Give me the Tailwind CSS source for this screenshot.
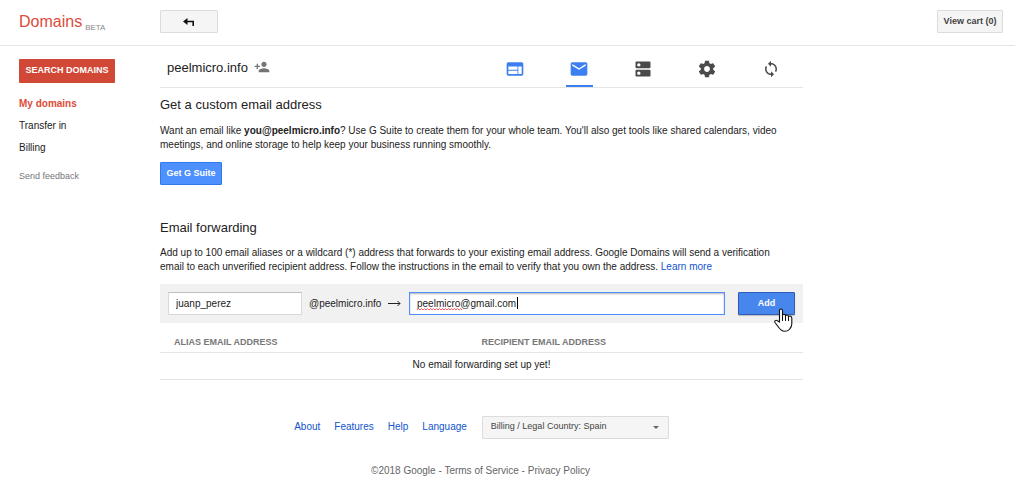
<!DOCTYPE html>
<html lang="en">
<head>
<meta charset="utf-8">
<meta name="viewport" content="width=device-width, initial-scale=1">
<title>Domains</title>
<script src="https://cdn.jsdelivr.net/npm/@tailwindcss/browser@4"></script>
</head>
<body class="bg-white font-['Liberation_Sans',Arial,sans-serif] text-[10px] leading-[14px] text-[#222]">
<header class="flex h-[46px] items-start border-b border-[#e5e5e5] pt-[10px] pr-[12px]">
  <div class="flex w-[160px] shrink-0 items-end gap-[3px] pl-[19px]">
    <a href="#" class="text-[16px] leading-[24px] text-[#dd4b39]">Domains</a>
    <span class="-mb-px text-[8px] leading-[14px] text-[#8a8a8a]">BETA</span>
  </div>
  <button aria-label="Back" class="flex h-[23px] w-[58px] items-center justify-center rounded-[1px] border border-[#dcdcdc] bg-[#f5f5f5]">
    <svg class="h-[8px] w-[12px]" viewBox="0 0 12 8"><path d="M0 3.500 4.500 0v7Z" fill="#111"/><path d="M3 3.500h7.200V8" fill="none" stroke="#111" stroke-width="1.600"/></svg>
  </button>
  <button class="ml-auto h-[23px] w-[66px] rounded-[1px] border border-[#dcdcdc] bg-[#f5f5f5] pb-[2px] text-[9px] font-bold whitespace-nowrap text-[#444]">View cart (0)</button>
</header>
<div class="flex pt-[13px]">
  <nav class="w-[160px] shrink-0 pl-[19px]">
    <button class="h-[24px] w-[96px] rounded-[1px] bg-[#d14836] pb-[2px] text-[9px] font-bold whitespace-nowrap text-white">SEARCH DOMAINS</button>
    <ul class="mt-[10px] leading-[22px]">
      <li><a href="#" class="font-bold text-[#dd4b39]">My domains</a></li>
      <li><a href="#">Transfer in</a></li>
      <li><a href="#">Billing</a></li>
    </ul>
    <a href="#" class="mt-[10px] block text-[9px] text-[#777]">Send feedback</a>
  </nav>
  <main class="max-w-[643px] flex-1">
    <div class="flex h-[29px] items-start border-b border-[#e5e5e5]">
      <h1 class="pl-[7px] text-[13px] leading-[18px]">peelmicro.info</h1>
      <button aria-label="Share domain" class="ml-[6px]"><svg class="h-[16px] w-[16px]" viewBox="0 0 24 24" fill="#757575"><path d="M15 12c2.210 0 4-1.790 4-4s-1.790-4-4-4-4 1.790-4 4 1.790 4 4 4zm-9-2V7H4v3H1v2h3v3h2v-3h3v-2H6zm9 4c-2.670 0-8 1.340-8 4v2h16v-2c0-2.660-5.330-4-8-4z"/></svg></button>
      <div class="ml-auto flex h-[28px] gap-[37px] pr-[18px]">
        <a href="#" aria-label="Website" class="flex w-[27px] justify-center pr-px"><svg class="h-[20px] w-[20px]" viewBox="0 0 24 24" fill="#3b7ff0"><path d="M20 4H4c-1.100 0-2 .9-2 2v12c0 1.100.9 2 2 2h16c1.100 0 2-.9 2-2V6c0-1.100-.9-2-2-2zm-5 14H4v-4h11v4zm0-5H4V9h11v4zm5 5h-4V9h4v9z"/></svg></a>
        <a href="#" aria-label="Email" aria-current="page" class="flex w-[27px] justify-center border-b-2 border-[#3b7ff0] pr-px"><svg class="h-[20px] w-[20px]" viewBox="0 0 24 24" fill="#3b7ff0"><path d="M20 4H4c-1.100 0-1.990.9-1.990 2L2 18c0 1.100.9 2 2 2h16c1.100 0 2-.9 2-2V6c0-1.100-.9-2-2-2zm0 4l-8 5-8-5V6l8 5 8-5v2z"/></svg></a>
        <a href="#" aria-label="DNS" class="flex w-[27px] justify-center pr-px"><svg class="h-[20px] w-[20px]" viewBox="0 0 24 24" fill="#4a4a4a"><path d="M20 13H4c-.55 0-1 .45-1 1v6c0 .55.45 1 1 1h16c.55 0 1-.45 1-1v-6c0-.55-.45-1-1-1zM7 19c-1.100 0-2-.9-2-2s.9-2 2-2 2 .9 2 2-.9 2-2 2zM20 3H4c-.55 0-1 .45-1 1v6c0 .55.45 1 1 1h16c.55 0 1-.45 1-1V4c0-.55-.45-1-1-1zM7 9c-1.100 0-2-.9-2-2s.9-2 2-2 2 .9 2 2-.9 2-2 2z"/></svg></a>
        <a href="#" aria-label="Settings" class="flex w-[27px] justify-center pr-px"><svg class="h-[20px] w-[20px]" viewBox="0 0 24 24" fill="#4a4a4a"><path d="M19.430 12.980c.04-.32.07-.64.07-.98s-.03-.66-.07-.98l2.110-1.650c.19-.15.24-.42.12-.64l-2-3.460c-.12-.22-.39-.3-.61-.22l-2.490 1c-.52-.4-1.080-.73-1.690-.98l-.38-2.650C14.460 2.180 14.250 2 14 2h-4c-.25 0-.46.18-.49.42l-.38 2.650c-.61.25-1.170.59-1.690.98l-2.490-1c-.23-.09-.49 0-.61.22l-2 3.460c-.13.22-.07.49.12.64l2.110 1.650c-.04.32-.07.65-.07.98s.03.66.07.98l-2.110 1.650c-.19.15-.24.42-.12.64l2 3.460c.12.22.39.3.61.22l2.490-1c.52.4 1.080.73 1.690.98l.38 2.650c.03.24.24.42.49.42h4c.25 0 .46-.18.49-.42l.38-2.650c.61-.25 1.170-.59 1.690-.98l2.490 1c.23.09.49 0 .61-.22l2-3.460c.12-.22.07-.49-.12-.64l-2.110-1.650zM12 15.500c-1.930 0-3.500-1.570-3.500-3.500s1.570-3.500 3.500-3.500 3.500 1.570 3.500 3.500-1.570 3.500-3.500 3.500z"/></svg></a>
        <a href="#" aria-label="Transfer" class="flex w-[27px] justify-center pr-px"><svg class="h-[20px] w-[20px]" viewBox="0 0 24 24" fill="#4a4a4a"><g transform="matrix(.9 0 0 .9 1.200 1.200)"><path d="M12 4V1L8 5l4 4V6c3.310 0 6 2.690 6 6 0 1.010-.25 1.970-.7 2.800l1.460 1.460C19.540 15.030 20 13.570 20 12c0-4.420-3.580-8-8-8zm0 14c-3.310 0-6-2.690-6-6 0-1.010.25-1.970.7-2.800L5.240 7.740C4.460 8.970 4 10.430 4 12c0 4.420 3.580 8 8 8v3l4-4-4-4v3z"/></g></svg></a>
      </div>
    </div>
    <section class="pt-[8px]">
      <h2 class="text-[13px] leading-[18px]">Get a custom email address</h2>
      <p class="mt-[10px]">Want an email like <b>you@peelmicro.info</b>? Use G Suite to create them for your whole team. You'll also get tools like shared calendars, video<br>meetings, and online storage to help keep your business running smoothly.</p>
      <button class="mt-[10px] h-[23px] w-[62px] rounded-[1px] border border-[#3079ed] bg-[#4d90fe] pb-[2px] text-[9px] font-bold whitespace-nowrap text-white">Get G Suite</button>
    </section>
    <section class="pt-[34px]">
      <h2 class="text-[13px] leading-[18px]">Email forwarding</h2>
      <p class="mt-[9px]">Add up to 100 email aliases or a wildcard (*) address that forwards to your existing email address. Google Domains will send a verification<br>email to each unverified recipient address. Follow the instructions in the email to verify that you own the address. <a href="#" class="text-[#1155cc]">Learn more</a></p>
      <form class="mt-[10px] flex items-center bg-[#f1f1f1] p-[8px]">
        <input aria-label="Alias" value="juanp_perez" class="h-[23px] w-[134px] border border-[#d9d9d9] border-t-[#c0c0c0] bg-white px-[7px]">
        <label for="recipient" class="ml-[7px] w-[75px] whitespace-nowrap">@peelmicro.info</label>
        <svg class="ml-[4px] h-[7px] w-[13px]" viewBox="0 0 13 7"><path d="M0 3.500h12M9.500 1 12 3.500 9.500 6" fill="none" stroke="#222"/></svg>
        <div class="relative ml-[8px] flex-1">
          <input id="recipient" value="peelmicro@gmail.com" class="block h-[23px] w-full border border-[#4d90fe] bg-white px-[7px] inset-shadow-[0_1px_2px_#0000004d]">
          <svg class="absolute top-[16px] left-[8px] h-[3px] w-[45px]" viewBox="0 0 45 3"><path d="M0 2l1.500-1.500 1.500 1.500 1.500-1.500 1.500 1.500 1.500-1.500 1.500 1.500 1.500-1.500 1.500 1.500 1.500-1.500 1.500 1.500 1.500-1.500 1.500 1.500 1.500-1.500 1.500 1.500 1.500-1.500 1.500 1.500 1.500-1.500 1.500 1.500 1.500-1.500 1.500 1.500 1.500-1.500 1.500 1.500 1.500-1.500 1.500 1.500 1.500-1.500 1.500 1.500 1.500-1.500 1.500 1.500 1.500-1.500 1.500 1.500" fill="none" stroke="#f33" stroke-width=".8"/></svg>
          <span class="absolute top-[5px] left-[108px] h-[12px] w-px bg-black"></span>
        </div>
        <div class="relative ml-[13px]">
          <button type="button" class="block h-[23px] w-[57px] rounded-[1px] border border-[#2f5bb7] bg-[#4787ed] pb-[2px] text-[9px] font-bold text-white shadow-[0_1px_1px_#0003]">Add</button>
          <svg class="absolute top-[16px] left-[36px] h-[24px] w-[19px]" viewBox="0 0 19 24"><path d="M5.500 14V2.500Q5.500 1 7 1t1.500 1.500V7.500Q8.500 6.300 10 6.300T11.500 8Q11.500 7 13 7t1.500 2Q14.500 8 16 8t1.800 2V16c0 3-1.800 4.500-2.500 5.500Q14 23.300 10.500 23.300C7 23.300 5.500 20.500 4 18.500L1 14.500C.2 12.800 1.700 11.700 3 12.600Z" fill="#fff" stroke="#111" stroke-width="1.100"/><path d="M8.500 7v6M11.500 8v5M14.500 9V13" stroke="#111"/></svg>
        </div>
      </form>
      <table class="w-full table-fixed">
        <thead class="text-left text-[9px] text-[#777]">
          <tr class="h-[29px] border-b border-[#e5e5e5]"><th class="w-1/2 pt-[10px] pl-[14px]">ALIAS EMAIL ADDRESS</th><th class="w-1/2 pt-[10px]">RECIPIENT EMAIL ADDRESS</th></tr>
        </thead>
        <tbody><tr class="h-[27px] border-b border-[#e5e5e5]"><td colspan="2" class="pb-[2px] text-center">No email forwarding set up yet!</td></tr></tbody>
      </table>
    </section>
  </main>
</div>
<footer class="mt-[36px] max-w-[963px]">
  <div class="flex items-center justify-center text-[#1155cc]">
    <nav class="flex gap-[14px] pr-[15px]"><a href="#">About</a><a href="#">Features</a><a href="#">Help</a><a href="#">Language</a></nav>
    <div class="relative">
      <select aria-label="Country" class="block h-[23px] w-[187px] appearance-none rounded-[1px] border border-[#dcdcdc] bg-[#f5f5f5] pr-[20px] pb-[2px] pl-[8px] text-[9px] text-[#444]"><option>Billing / Legal Country: Spain</option></select>
      <svg class="pointer-events-none absolute top-[10px] right-[10px] h-[3px] w-[6px]" viewBox="0 0 6 3"><path d="M0 0h6L3 3Z" fill="#666"/></svg>
    </div>
  </div>
  <p class="mt-[25px] pr-[2px] text-center text-[#666]">©2018 Google - <a href="#">Terms of Service</a> - <a href="#">Privacy Policy</a></p>
</footer>
</body>
</html>
